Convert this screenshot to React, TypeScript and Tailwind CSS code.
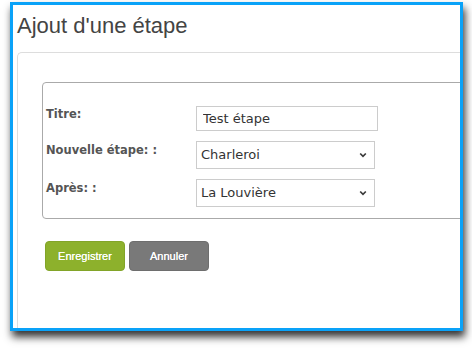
import { useState } from "react";

function Chevron() {
  return (
    <svg width="8" height="6" viewBox="0 0 8 6" className="absolute right-[8px] top-1/2 -translate-y-1/2 pointer-events-none">
      <path d="M1.2 1.5 L4 4.3 L6.8 1.5" fill="none" stroke="#3a3a3a" strokeWidth="1.7" />
    </svg>
  );
}

export default function App() {
  const [titre, setTitre] = useState("Test étape");

  return (
    <div className="w-[472px] h-[348px] bg-white pt-[2px] pl-[10px]">
      <div className="w-[453px] h-[329px] border-[3px] border-[#0aa2f8] bg-white overflow-hidden flex flex-col shadow-[2px_6px_8px_rgba(0,0,0,0.8)]">
        <h1 className="ml-[4px] mt-[8px] text-[22px] leading-[25px] text-[#444] font-['Liberation_Sans',sans-serif]">
          Ajout d'une étape
        </h1>

        <div className="ml-[4px] mt-[14px] -mr-[20px] flex-1 border-t border-l border-[#ddd] rounded-tl-[5px] pl-[24px] pt-[29px]">
          <div className="-mr-[20px] border border-[#aaa] rounded-[4px] pl-[3px] pt-[23px] pb-[11px] grid grid-cols-[150px_1fr] gap-y-[10px] font-['DejaVu_Sans',sans-serif]">
            <label className="self-center pb-[10px] text-[11.5px] leading-[14px] font-bold text-[#555]">Titre:</label>
            <input
              value={titre}
              onChange={(e) => setTitre(e.target.value)}
              className="w-[182px] h-[25px] border border-[#ccc] px-[6px] text-[13px] text-[#333] outline-none"
            />

            <label className="self-center pb-[10px] text-[11.5px] leading-[14px] font-bold text-[#555]">Nouvelle étape: :</label>
            <div className="relative w-[179px] h-[28px]">
              <select className="appearance-none w-full h-full border border-[#ccc] bg-white pl-[4px] text-[13px] text-[#333] outline-none" defaultValue="Charleroi">
                <option>Charleroi</option>
                <option>Mons</option>
                <option>Namur</option>
              </select>
              <Chevron />
            </div>

            <label className="self-center pb-[10px] text-[11.5px] leading-[14px] font-bold text-[#555]">Après: :</label>
            <div className="relative w-[179px] h-[28px]">
              <select className="appearance-none w-full h-full border border-[#ccc] bg-white pl-[4px] text-[13px] text-[#333] outline-none" defaultValue="La Louvière">
                <option>La Louvière</option>
                <option>Charleroi</option>
                <option>Tournai</option>
              </select>
              <Chevron />
            </div>
          </div>

          <div className="mt-[22px] ml-[3px] flex gap-[4px] font-['Liberation_Sans',sans-serif]">
            <button className="w-[80px] h-[30px] rounded-[4px] bg-[#8db12c] border border-[#82a428] text-white text-[11px] [text-shadow:0_0_0.4px_#fff]">
              Enregistrer
            </button>
            <button className="w-[80px] h-[30px] rounded-[4px] bg-[#797979] border border-[#6e6e6e] text-white text-[11px] [text-shadow:0_0_0.4px_#fff]">
              Annuler
            </button>
          </div>
        </div>
      </div>
    </div>
  );
}
